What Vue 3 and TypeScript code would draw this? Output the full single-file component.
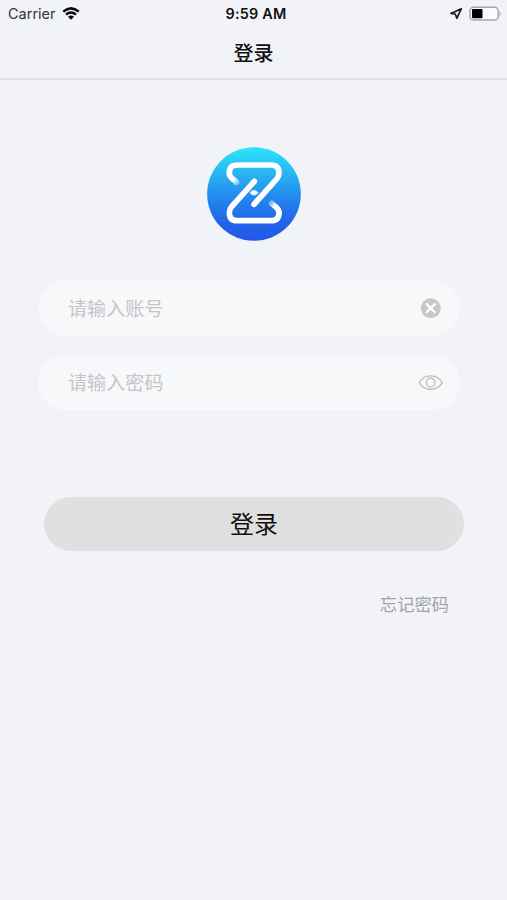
<script setup lang="ts">
import { ref } from 'vue'

const account = ref('')
const password = ref('')
const passwordVisible = ref(false)
</script>

<template>
  <main class="screen">
    <div class="status">
      <div class="side">
        <span class="carrier">Carrier</span>
        <svg class="wifi" viewBox="0 0 18 13" width="18" height="13">
          <path d="M1.2 4.6Q9 -1.9 16.8 4.6M4 7.5Q9 3.4 14 7.5" fill="none" stroke="#080808" stroke-width="2.5" />
          <path d="M6 9.8Q9 7.4 12 9.8L9 12.8Z" fill="#080808" />
        </svg>
      </div>
      <span class="time">9:59 AM</span>
      <div class="side right">
        <svg viewBox="0 0 14 13" width="14" height="13">
          <path d="M12.3 1.7L1.9 6.4L6.3 7L7.8 11.3Z" fill="none" stroke="#151515" stroke-width="1.6" stroke-linejoin="round" />
        </svg>
        <svg viewBox="0 0 33 16" width="33" height="16">
          <rect x="1" y="1.2" width="28.2" height="12.8" rx="3.6" fill="#fbfbfc" stroke="#a5a6a8" stroke-width="1.5" />
          <rect x="3" y="3" width="10.5" height="9.2" rx="1" fill="#000" />
          <path d="M30.6 5.2Q32.9 7.6 30.6 10Z" fill="#999" />
        </svg>
      </div>
    </div>
    <header class="nav">登录</header>

    <svg class="logo" viewBox="21 20 282 282">
      <defs>
        <linearGradient id="disc" x1="0" y1="0" x2="0" y2="1">
          <stop offset="0" stop-color="#2ce5fb" />
          <stop offset=".25" stop-color="#2abaf3" />
          <stop offset=".55" stop-color="#2386ee" />
          <stop offset=".8" stop-color="#2264e9" />
          <stop offset="1" stop-color="#2257e8" />
        </linearGradient>
        <linearGradient id="tip" gradientUnits="userSpaceOnUse" x1="101" y1="117" x2="119" y2="134">
          <stop offset="0" stop-color="#fff" />
          <stop offset="1" stop-color="#fff" stop-opacity=".15" />
        </linearGradient>
      </defs>
      <circle cx="162" cy="161" r="140.5" fill="url(#disc)" />
      <g fill="none" stroke-width="17" stroke-linecap="round" stroke-linejoin="round">
        <path d="M110 126L96 114Q88 107 88 98" stroke="url(#tip)" />
        <path d="M110 126L96 114Q88 107 88 98" stroke="url(#tip)" transform="rotate(180 162.5 157.5)" />
        <path d="M88 98Q88 74 112 74H213Q237 74 237 98Q237 108 230 116L162 192" stroke="#fff" />
        <path d="M88 98Q88 74 112 74H213Q237 74 237 98Q237 108 230 116L162 192" stroke="#fff" transform="rotate(180 162.5 157.5)" />
      </g>
      <path d="M149 157L157 150H167L176 157L167 165H157Z" fill="#e8fbff" />
    </svg>

    <form class="form" @submit.prevent>
      <div class="field">
        <input v-model="account" type="text" placeholder="请输入账号" />
        <button class="icon" type="button" @click="account = ''">
          <svg viewBox="0 0 26 22" width="26" height="22">
            <circle cx="12.8" cy="11.2" r="10" fill="#c7c8c8" />
            <path d="M8.7 7.1L16.9 15.3M16.9 7.1L8.7 15.3" stroke="#fff" stroke-width="2.3" stroke-linecap="round" />
          </svg>
        </button>
      </div>
      <div class="field second">
        <input v-model="password" :type="passwordVisible ? 'text' : 'password'" placeholder="请输入密码" />
        <button class="icon" type="button" @click="passwordVisible = !passwordVisible">
          <svg viewBox="0 0 26 18" width="26" height="18" fill="none" stroke="#bebfc1" stroke-width="1.4">
            <path d="M1.2 8.6C3.6 4.3 7.8 1.9 12.7 1.9S21.8 4.3 24.2 8.6C21.8 12.9 17.6 15.3 12.7 15.3S3.6 12.9 1.2 8.6Z" stroke-linejoin="round" />
            <circle cx="12.7" cy="8.6" r="4.3" />
          </svg>
        </button>
      </div>
      <button class="submit" type="submit">登录</button>
      <button class="forgot" type="button">忘记密码</button>
    </form>
  </main>
</template>

<style>
body {
  background: #f1f3f8;
}
</style>

<style scoped>
.screen {
  box-sizing: border-box;
  display: flex;
  flex-direction: column;
  width: 100%;
  min-height: 900px;
  background: #f1f3f8;
  font-family: Inter, "Noto Sans CJK SC", sans-serif;
  color: #111;
}

.status {
  display: grid;
  grid-template-columns: 1fr auto 1fr;
  align-items: center;
  height: 27px;
  padding: 0 5px 0 8px;
  line-height: 27px;
}

.side {
  display: flex;
  align-items: center;
  gap: 6px;
}

.right {
  justify-content: flex-end;
}

.carrier {
  font-size: 14.5px;
  color: #333438;
}

.time {
  padding-left: 2px;
  font-size: 14.4px;
  font-weight: 600;
  letter-spacing: 0.2px;
}

.nav {
  box-sizing: border-box;
  height: 53px;
  padding-top: 2px;
  border-bottom: 2px solid #dfe1e6;
  font-size: 20px;
  font-weight: 500;
  line-height: 51px;
  text-align: center;
}

.logo {
  width: 94px;
  height: 94px;
  margin: 67px auto 0;
}

.form {
  display: flex;
  flex-direction: column;
  margin: 39px 43px 0 38px;
}

.field {
  box-sizing: border-box;
  display: flex;
  align-items: center;
  width: 422px;
  height: 56px;
  padding: 0 16px 0 30px;
  border-radius: 28px;
  background: #f7f8fa;
}

.second {
  height: 55px;
  margin-top: 19px;
}

input {
  flex: 1;
  min-width: 0;
  height: 40px;
  padding: 2px 0 0;
  border: 0;
  outline: 0;
  background: transparent;
  font: 19.1px Inter, "Noto Sans CJK SC", sans-serif;
}

.second input {
  padding-top: 0;
}

input::placeholder {
  color: #c4c5c9;
  opacity: 1;
}

button {
  padding: 0;
  border: 0;
  background: transparent;
  font-family: inherit;
}

.icon {
  display: flex;
}

.submit {
  width: 420px;
  height: 54px;
  margin: 87px 0 0 6px;
  padding-top: 2px;
  border-radius: 27px;
  background: #e0e0e0;
  color: #111;
  font-size: 24px;
  line-height: 52px;
}

.forgot {
  align-self: flex-end;
  height: 30px;
  margin: 39px 15px 0 0;
  color: #a2a3a7;
  font-size: 17.3px;
  line-height: 30px;
}
</style>
